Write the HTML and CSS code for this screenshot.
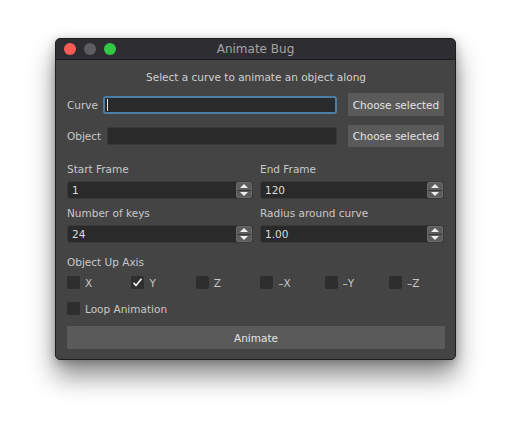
FILE: index.html
```html
<!DOCTYPE html>
<html>
<head>
<meta charset="utf-8">
<link rel="stylesheet" href="styles.css">
</head>
<body>
<div class="page">
  <div class="window">
    <div class="titlebar">
      <div class="lights">
        <span class="light red"></span>
        <span class="light grey"></span>
        <span class="light green"></span>
      </div>
      <div class="title">Animate Bug</div>
      <div></div>
    </div>
    <div class="content">
      <div class="subtitle">Select a curve to animate an object along</div>
      <div class="pick-row row-curve">
        <span class="label">Curve</span>
        <div class="text-input focused"><span class="caret"></span></div>
        <button class="btn pick-btn">Choose selected</button>
      </div>
      <div class="pick-row row-object">
        <span class="label">Object</span>
        <div class="text-input"></div>
        <button class="btn pick-btn">Choose selected</button>
      </div>
      <div class="fields">
        <div class="field">
          <div class="label">Start Frame</div>
          <div class="spin"><span class="value">1</span><span class="arrows"><span class="up"></span><span class="down"></span></span></div>
        </div>
        <div class="field">
          <div class="label">End Frame</div>
          <div class="spin"><span class="value">120</span><span class="arrows"><span class="up"></span><span class="down"></span></span></div>
        </div>
        <div class="field">
          <div class="label">Number of keys</div>
          <div class="spin"><span class="value">24</span><span class="arrows"><span class="up"></span><span class="down"></span></span></div>
        </div>
        <div class="field">
          <div class="label">Radius around curve</div>
          <div class="spin"><span class="value">1.00</span><span class="arrows"><span class="up"></span><span class="down"></span></span></div>
        </div>
      </div>
      <div class="label axis-label">Object Up Axis</div>
      <div class="axes">
        <label class="check"><span class="box"></span>X</label>
        <label class="check"><span class="box checked"><svg width="13" height="13" viewBox="0 0 13 13"><polyline points="2.5,6.8 5,9.6 10.5,2.8" fill="none" stroke="#f2f2f2" stroke-width="1.6"/></svg></span>Y</label>
        <label class="check"><span class="box"></span>Z</label>
        <label class="check"><span class="box"></span>–X</label>
        <label class="check"><span class="box"></span>–Y</label>
        <label class="check"><span class="box"></span>–Z</label>
      </div>
      <label class="check loop"><span class="box"></span>Loop Animation</label>
      <button class="btn animate">Animate</button>
    </div>
  </div>
</div>
</body>
</html>
```

FILE: styles.css
```css
html, body {
  margin: 0;
  padding: 0;
  background: #ffffff;
}
body {
  font-family: "DejaVu Sans", "Liberation Sans", sans-serif;
  font-size: 10.5px;
  color: #c8c8c8;
  min-height: 434px;
}
.page {
  padding: 38px 0 0 55px;
}
.window {
  width: 401px;
  height: 322px;
  box-sizing: border-box;
  background: #444444;
  border-radius: 5px;
  overflow: hidden;
  border: 1px solid #1e1e1e;
  box-shadow: 0 16px 26px rgba(0,0,0,0.45), 0 2px 10px rgba(0,0,0,0.25);
  display: flex;
  flex-direction: column;
}
.titlebar {
  height: 20px;
  flex: none;
  background: #2e2e32;
  border-bottom: 1px solid #1a1a1a;
  display: grid;
  grid-template-columns: 1fr auto 1fr;
  align-items: center;
}
.lights {
  display: flex;
  gap: 8px;
  padding-left: 8px;
}
.light {
  width: 12px;
  height: 12px;
  border-radius: 50%;
}
.red { background: #fc5b57; }
.grey { background: #5e5e62; }
.green { background: #33c748; }
.title {
  font-size: 12px;
  color: #a4a4a6;
  line-height: 20px;
}
.content {
  padding: 9px 10px 0 11px;
  display: flex;
  flex-direction: column;
}
.subtitle {
  height: 16px;
  line-height: 16px;
  text-align: center;
  color: #d0d0d0;
}
.label {
  line-height: 14px;
  color: #c8c8c8;
}
.pick-row {
  display: flex;
  align-items: center;
}
.row-curve {
  margin-top: 8px;
  height: 23px;
}
.row-object {
  margin-top: 9px;
  height: 22px;
}
.text-input {
  flex: 1;
  height: 18px;
  box-sizing: border-box;
  margin-left: 6px;
  background: #2a2a2a;
  border: 1px solid #393939;
  border-radius: 2px;
  display: flex;
  align-items: center;
}
.text-input.focused {
  border: 2px solid #4b7ea6;
  border-radius: 3px;
  margin-left: 5px;
}
.caret {
  width: 1px;
  height: 12px;
  margin-left: 2px;
  background: #e8e8e8;
}
.btn {
  font: inherit;
  border: none;
  background: #5a5a5a;
  color: #e4e4e4;
  padding: 0;
  border-radius: 1px;
}
.pick-btn {
  width: 96px;
  height: 100%;
  margin-left: 11px;
  margin-right: 1px;
}
.fields {
  margin-top: 15px;
  display: grid;
  grid-template-columns: 186px 184px;
  column-gap: 7px;
  row-gap: 7px;
}
.field .spin {
  margin-top: 5px;
}
.spin {
  height: 18px;
  box-sizing: border-box;
  background: #2a2a2a;
  border: 1px solid #393939;
  border-radius: 3px;
  display: flex;
  align-items: center;
  justify-content: space-between;
}
.value {
  padding-left: 4px;
  color: #dcdcdc;
}
.arrows {
  width: 16px;
  height: 16px;
  box-sizing: border-box;
  background: #5c5c5c;
  border: 1px solid #6a6a6a;
  border-radius: 2px;
  display: flex;
  flex-direction: column;
}
.arrows .up, .arrows .down {
  flex: 1;
  display: flex;
  align-items: center;
  justify-content: center;
}
.arrows .up {
  border-bottom: 1px solid #3a3a3a;
}
.arrows .up::before {
  content: "";
  border-left: 4px solid transparent;
  border-right: 4px solid transparent;
  border-bottom: 4px solid #eeeeee;
}
.arrows .down::before {
  content: "";
  border-left: 4px solid transparent;
  border-right: 4px solid transparent;
  border-top: 4px solid #eeeeee;
}
.axis-label {
  margin-top: 12px;
}
.axes {
  margin-top: 7px;
  display: flex;
}
.axes .check {
  width: 64.4px;
  flex: none;
}
.check {
  display: flex;
  align-items: center;
  height: 13px;
  color: #c8c8c8;
}
.box {
  width: 13px;
  height: 13px;
  border-radius: 2px;
  background: #2e2e2e;
  margin-right: 5px;
  flex: none;
  display: flex;
}
.loop {
  margin-top: 13px;
}
.animate {
  margin-top: 11px;
  height: 23px;
  width: 378px;
}
```
